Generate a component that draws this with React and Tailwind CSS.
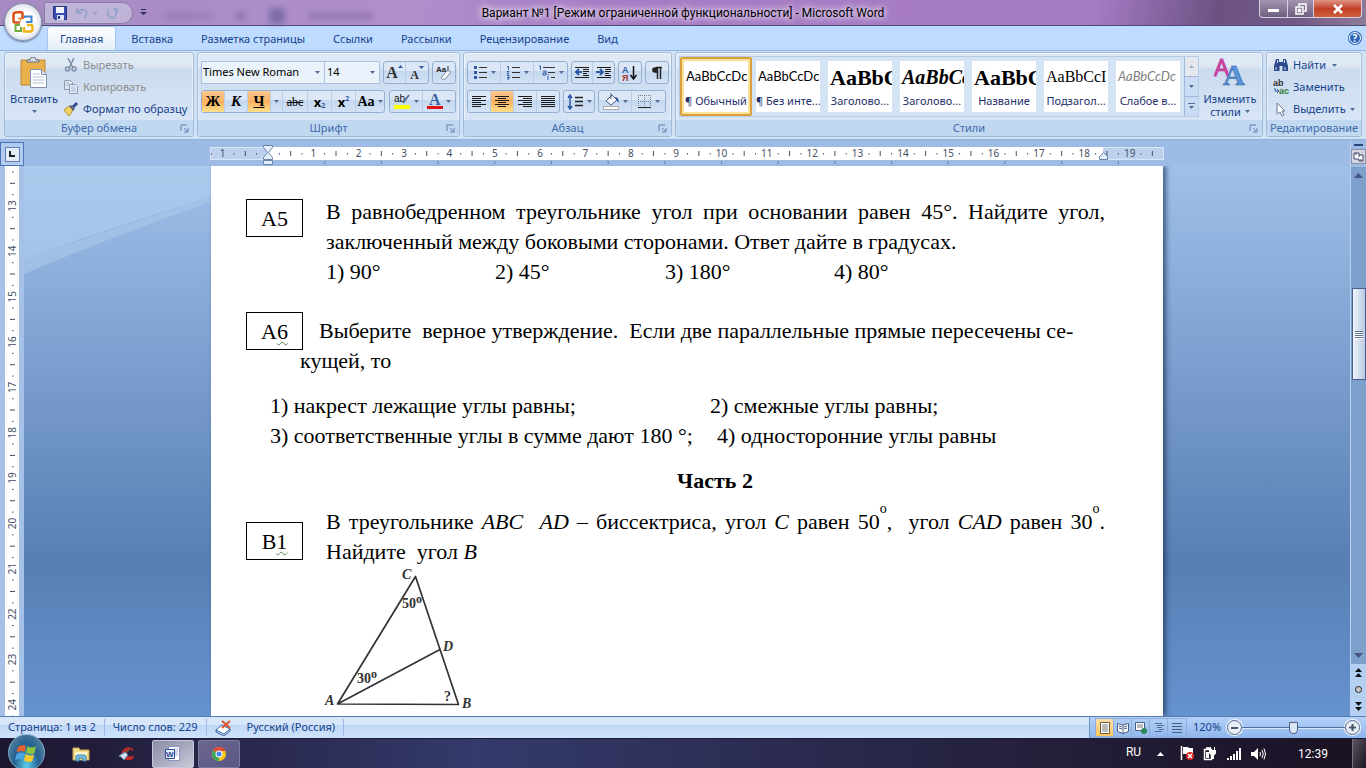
import React, { useState } from 'react';
import clsx from 'clsx';

const CM = 45.35;

const tabs = ['Главная', 'Вставка', 'Разметка страницы', 'Ссылки', 'Рассылки', 'Рецензирование', 'Вид'];

const styles = [
  { name: '¶ Обычный', preview: 'AaBbCcDc', font: 'font-[Lato,sans-serif] text-[13px]' },
  { name: '¶ Без инте...', preview: 'AaBbCcDc', font: 'font-[Lato,sans-serif] text-[13px]' },
  { name: 'Заголово...', preview: 'AaBbC', font: "font-['Liberation_Serif',serif] text-[22px] font-bold" },
  { name: 'Заголово...', preview: 'AaBbCc', font: "font-['Liberation_Serif',serif] text-[20px] font-bold italic" },
  { name: 'Название', preview: 'AaBbC', font: "font-['Liberation_Serif',serif] text-[22px] font-bold" },
  { name: 'Подзагол...', preview: 'AaBbCcI', font: "font-['Liberation_Serif',serif] text-[16px]" },
  { name: 'Слабое в...', preview: 'AaBbCcDc', font: 'font-[Lato,sans-serif] text-[13px] italic text-[#808080]' },
];

function Arrow({ className }) {
  return (
    <svg width="5" height="3" viewBox="0 0 5 3" className={clsx('shrink-0', className)} aria-hidden="true">
      <path d="M0 0h5L2.500 3z" fill="#4f6c9c" />
    </svg>
  );
}

function Svg({ w = 16, h = 16, children, className }) {
  return (
    <svg width={w} height={h} viewBox={`0 0 ${w} ${h}`} className={clsx('shrink-0', className)} fill="none" aria-hidden="true">
      {children}
    </svg>
  );
}

function Group({ label, launcher = true, className, children }) {
  return (
    <section className={clsx('flex flex-col rounded-[3px] border border-[#9ebbdc] bg-linear-to-b from-[#dfe9f5] from-15% via-[#cbdbee] via-20% to-[#dbe8f8] shadow-[inset_0_0_0_1px_rgba(255,255,255,0.5)]', className)}>
      <div className="flex flex-1 px-[3px]">{children}</div>
      <div className="relative flex h-4 items-center justify-center rounded-b-[3px] bg-[#c1d8f1] px-4 leading-4 text-[#3e6aaa]">
        <h2>{label}</h2>
        {launcher && (
          <button aria-label={`${label}: параметры`} className="absolute right-1 top-1">
            <Svg w={9} h={9}>
              <path d="M1 7V1h6M4 4l3 3M8 4v4H4" stroke="#5f7fae" />
            </Svg>
          </button>
        )}
      </div>
    </section>
  );
}

function Box({ children, className }) {
  return (
    <div className={clsx('flex h-[23px] divide-x divide-[#b9cde6] rounded-[3px] border border-[#94b0d4] bg-linear-to-b from-[#dbe7f6] from-40% via-[#c5d8ef] via-45% to-[#d3e2f5]', className)}>
      {children}
    </div>
  );
}

function Tool({ label, active, className, children }) {
  return (
    <button
      aria-label={label}
      className={clsx('flex items-center justify-center gap-[3px]', active && 'bg-linear-to-b from-[#fbc78f] via-[#fbb262] to-[#ffe08a]', className)}
    >
      {children}
    </button>
  );
}

function lines(rows, color = '#1b1b1b') {
  return rows.map(([x1, x2], i) => <path key={i} d={`M${x1} ${i * 2 + 1.5}H${x2}`} stroke={color} />);
}

function OfficeButton() {
  return (
    <button aria-label="Кнопка Office" className="absolute left-1 top-[3px] z-10 flex size-[38px] items-center justify-center rounded-full border border-[#8b97ac] bg-radial from-white from-45% via-[#dfe4ec] via-70% to-[#b4bfcf] shadow-[0_1px_2px_rgba(30,40,80,0.6)]">
      <Svg w={24} h={24}>
        <path d="M9 12.500H4Q2.500 12.500 2.500 11V5Q2.500 3 4.500 2.500L9 2Q11.500 2 11.500 4V9" stroke="#d9541e" strokeWidth="2.600" />
        <path d="M14 8V6.500H20.500V12H15" stroke="#3f86cf" strokeWidth="2" />
        <path d="M9 15H4.500V21H10V17" stroke="#6fae3a" strokeWidth="2" />
        <path d="M13 17V21.500H20Q21.500 21 21.500 19V16.500Q21.500 15 20 15H16" stroke="#eeb31b" strokeWidth="2.600" />
        <path d="M7 8.500H9.500V11" stroke="#e48a28" strokeWidth="1.500" />
      </Svg>
    </button>
  );
}

function TitleBar() {
  return (
    <header className="grid h-[26px] shrink-0 grid-cols-[1fr_auto_1fr] border-b border-[#4c4a72] bg-[linear-gradient(100deg,#a58bc2_0%,#b08fcb_30%,#a77cc5_45%,#a57bc4_80%,#6b5283_89%,#715a86_95%,#8f7c9a_100%)]">
      <div className="flex items-start pl-[44px]">
        <div className="mt-[2px] flex h-[22px] w-[89px] items-center gap-2 rounded-r-full border border-[#8d7bae] bg-[#c0b3d8] pl-2">
          <button aria-label="Сохранить">
            <Svg w={14} h={14}>
              <path d="M.5.500h13v13H2L.5 12z" fill="#3a4db0" stroke="#27357f" />
              <path d="M3 1h8v6H3z" fill="#f2f5ff" />
              <path d="M4 9h7v5H4z" fill="#dfe4f5" />
              <path d="M5 10h2v3H5z" fill="#27357f" />
            </Svg>
          </button>
          <button aria-label="Отменить" className="flex items-center gap-1">
            <Svg w={14} h={14}>
              <path d="M2 2v5h5M2.500 6.500Q6 2 10 4.500T9 12" stroke="#9aa5cb" strokeWidth="2" />
            </Svg>
            <Svg w={5} h={3}>
              <path d="M0 0h5L2.500 3z" fill="#a39fc4" />
            </Svg>
          </button>
          <button aria-label="Повторить">
            <Svg w={12} h={14}>
              <path d="M3 3Q0 8 4 11T10 8V4M7 3h4v4" stroke="#9aa5cb" strokeWidth="2" />
            </Svg>
          </button>
        </div>
        <button aria-label="Настройка панели быстрого доступа" className="ml-[7px] mt-2">
          <Svg w={7} h={8}>
            <path d="M1 1.500h5" stroke="#2e2d63" />
            <path d="M0 4h7L3.500 7z" fill="#2e2d63" />
          </Svg>
        </button>
        <div className="ml-[18px] mt-2 flex gap-6 opacity-50 blur-[3px]" aria-hidden="true">
          <i className="mt-1 h-2 w-12 bg-[#8a72ab]" />
          <i className="mt-1 size-2 bg-[#6d5590]" />
          <i className="size-4 rounded bg-[#4f508f]" />
          <i className="mt-1 h-2 w-16 bg-[#7d639f]" />
        </div>
      </div>
      <h1 className="self-center font-[Roboto,sans-serif] text-[12px] text-black [text-shadow:0_0_6px_white,0_0_8px_white]">
        Вариант №1 [Режим ограниченной функциональности] - Microsoft Word
      </h1>
      <div className="flex justify-end pr-1">
        <div className="flex h-[18px] rounded-b-[4px] border border-t-0 border-[#d8cfe0] bg-linear-to-b from-[#a394b0] to-[#6e5f80]">
          <button aria-label="Свернуть" className="flex w-7 items-end justify-center border-r border-[#d8cfe0] pb-[5px]">
            <i className="h-[3px] w-[11px] bg-white" />
          </button>
          <button aria-label="Восстановить" className="flex w-[26px] items-center justify-center border-r border-[#d8cfe0]">
            <Svg w={12} h={12}>
              <path d="M4 3V1h7v7H9M1 4h7v7H1zM3.500 6.500h2v2h-2z" stroke="white" strokeWidth="1.500" />
            </Svg>
          </button>
          <button aria-label="Закрыть" className="flex w-[47px] items-center justify-center rounded-br-[4px] bg-linear-to-b from-[#dd9482] via-[#c2402a] to-[#d0613b]">
            <Svg w={12} h={10}>
              <path d="M2 1l8 8M10 1L2 9" stroke="white" strokeWidth="2.500" />
            </Svg>
          </button>
        </div>
      </div>
    </header>
  );
}

function Tabs() {
  const [current, setCurrent] = useState('Главная');
  return (
    <nav className="flex h-6 shrink-0 items-end gap-1 bg-[#bfdbff] pl-12 pr-[5px]">
      {tabs.map((tab) => (
        <button
          key={tab}
          onClick={() => setCurrent(tab)}
          className={clsx('h-[23px] rounded-t-[3px] px-3 leading-5', tab === current ? 'bg-linear-to-b from-white to-[#e3edf9] text-[#15428b] shadow-[0_0_2px_#6593cf]' : 'text-[#15428b]')}
        >
          {tab}
        </button>
      ))}
      <button aria-label="Справка" className="mb-[6px] ml-auto flex size-[12px] items-center justify-center rounded-full border border-white bg-[#2a63b8] text-[10px] font-bold leading-3 text-white shadow-[0_0_0_1px_#2a63b8]">
        ?
      </button>
    </nav>
  );
}

function ClipboardGroup() {
  return (
    <Group label="Буфер обмена" className="w-[190px]">
      <button className="flex w-[52px] shrink-0 flex-col items-center pt-[4px] text-[#15428b]">
        <Svg w={28} h={32}>
          <path d="M1 3h24v25H1z" fill="#e9b04c" stroke="#bd8734" />
          <path d="M7 5V3h3q0-3 3-3t3 3h3v2z" fill="#d8dde6" stroke="#6b7280" />
          <path d="M10.500 12.500h11l5 5v13h-16z" fill="white" stroke="#8190ad" />
          <path d="M13 17h7M13 20h11M13 23h11M13 26h11" stroke="#b3bfd4" />
          <path d="M21.500 12.500v5h5" fill="#dbe4f2" stroke="#8190ad" />
        </Svg>
        <span className="mt-[2px] leading-4">Вставить</span>
        <Arrow className="mt-[3px]" />
      </button>
      <div className="ml-[3px] flex flex-col pt-px">
        <button className="flex h-[22px] items-center gap-[5px] pl-px text-[#8d8d8d]">
          <Svg w={14} h={14}>
            <path d="M4 0l4.500 9M10 0L5.500 9" stroke="#7f8da8" strokeWidth="1.500" />
            <circle cx="3.500" cy="11" r="2" stroke="#7f8da8" strokeWidth="1.500" />
            <circle cx="10" cy="11" r="2" stroke="#7f8da8" strokeWidth="1.500" />
          </Svg>
          Вырезать
        </button>
        <button className="flex h-[22px] items-center gap-1 text-[#8d8d8d]">
          <Svg w={16} h={14}>
            <path d="M1.500.500h6l2 2v7h-8z" fill="#dbe3ef" stroke="#8d9bb4" />
            <path d="M6.500 4.500h6l2 2v7h-8z" fill="#e8eef6" stroke="#8d9bb4" />
            <path d="M8 7h4M8 9h5M8 11h5M3 3h3M3 5h3" stroke="#a9b5c9" />
          </Svg>
          Копировать
        </button>
        <button className="flex h-[22px] items-center gap-1 text-[#15428b]">
          <Svg w={16} h={14}>
            <path d="M1 8l5-4 4 4-4 6z" fill="#f0d264" stroke="#b5922c" />
            <path d="M6 4l2-1 4 4-2 2z" fill="#5d6475" />
            <path d="M10 5l4-4" stroke="#2e4b90" strokeWidth="3" />
          </Svg>
          Формат по образцу
        </button>
      </div>
    </Group>
  );
}

const serif = "font-['Liberation_Serif',serif] text-black";

function FontGroup() {
  return (
    <Group label="Шрифт" className="w-[263px]">
      <div className="flex flex-1 flex-col gap-[6px] pt-2">
        <div className="flex justify-between">
          <div className="flex h-[23px] divide-x divide-[#abc1de] border border-[#abc1de] bg-[#eaf2fb]">
            <label className="relative flex items-center">
              <span className="sr-only">Шрифт</span>
              <select className="w-[122px] appearance-none bg-transparent pl-px text-black">
                <option>Times New Roman</option>
                <option>Arial</option>
              </select>
              <Arrow className="pointer-events-none absolute right-1" />
            </label>
            <label className="relative flex items-center">
              <span className="sr-only">Размер шрифта</span>
              <select className="w-[54px] appearance-none bg-transparent pl-[2px] text-black">
                <option>14</option>
                <option>16</option>
              </select>
              <Arrow className="pointer-events-none absolute right-1" />
            </label>
          </div>
          <Box>
            <Tool label="Увеличить размер" className={clsx('w-[22px] text-[16px] font-bold', serif)}>
              <span className="flex text-[#333]">A<Svg w={5} h={3} className="mt-1"><path d="M0 3h5L2.500 0z" fill="#2f5aa5" /></Svg></span>
            </Tool>
            <Tool label="Уменьшить размер" className={clsx('w-[22px] text-[12px] font-bold', serif)}>
              <span className="flex pt-1 text-[#333]">A<Svg w={5} h={3}><path d="M0 0h5L2.500 3z" fill="#2f5aa5" /></Svg></span>
            </Tool>
          </Box>
          <Box>
            <Tool label="Очистить формат" className="w-[22px]">
              <Svg w={18} h={18}>
                <text x="1" y="8" fontSize="8" fontWeight="bold" fill="#222" fontFamily="Liberation Sans">Aa</text>
                <path d="M13 2v6" stroke="#333" />
                <path d="M6 14l6-7q2-1 4 1l-6 7q-3 1-4-1z" fill="white" stroke="#7887a3" />
              </Svg>
            </Tool>
          </Box>
        </div>
        <div className="flex justify-between">
          <Box>
            <Tool label="Полужирный" active className={clsx('w-[23px] text-[15px] font-bold', serif)}>Ж</Tool>
            <Tool label="Курсив" className={clsx('w-[23px] text-[15px] font-bold italic', serif)}>К</Tool>
            <Tool label="Подчеркнутый" active className={clsx('w-[23px] text-[15px] font-bold underline', serif)}>Ч</Tool>
            <Tool label="Вид подчеркивания" className="w-3"><Arrow /></Tool>
            <Tool label="Зачеркнутый" className={clsx('w-[25px] text-[12px] line-through', serif)}>abc</Tool>
            <Tool label="Подстрочный знак" className="w-6 text-[13px] font-bold leading-4 text-black">
              <span className="flex items-end">x<span className="text-[7px] leading-[9px] text-[#2f5aa5]">2</span></span>
            </Tool>
            <Tool label="Надстрочный знак" className="w-6 text-[13px] font-bold leading-4 text-black">
              <span className="flex items-start">x<span className="text-[7px] leading-[9px] text-[#2f5aa5]">2</span></span>
            </Tool>
            <Tool label="Регистр" className={clsx('w-[28px] text-[14px] font-bold', serif)}>Aa<Arrow /></Tool>
          </Box>
          <Box>
            <Tool label="Цвет выделения" className="w-[33px]">
              <Svg w={17} h={17}>
                <text x="0" y="9" fontSize="10" fill="#111" fontFamily="Liberation Sans">ab</text>
                <path d="M15 2L9 10" stroke="#56719f" strokeWidth="2" />
                <path d="M0 12h16v4H0z" fill="#ffff00" />
              </Svg>
              <Arrow />
            </Tool>
            <Tool label="Цвет текста" className="w-[32px]">
              <Svg w={16} h={17}>
                <text x="2" y="12" fontSize="16" fontWeight="bold" fill="#3f62a3" fontFamily="Liberation Serif">A</text>
                <path d="M0 13h16v3H0z" fill="#e01010" />
              </Svg>
              <Arrow />
            </Tool>
          </Box>
        </div>
      </div>
    </Group>
  );
}

function ParagraphGroup() {
  return (
    <Group label="Абзац" className="w-[209px]">
      <div className="flex flex-1 flex-col gap-[6px] pt-2">
        <div className="flex gap-[3px]">
          <Box>
            <Tool label="Маркеры" className="w-[33px]">
              <Svg w={15} h={14}>
                <path d="M1 1.500h3M1 6.500h3M1 11.500h3" stroke="#2f5aa5" strokeWidth="3" />
                <path d="M6 1.500h8M6 6.500h8M6 11.500h8" stroke="#333" />
              </Svg>
              <Arrow />
            </Tool>
            <Tool label="Нумерация" className="w-[33px]">
              <Svg w={15} h={14}>
                <path d="M1 .500h1.500V4M1 5.500h2L1 8h2M1 9.500h2V13H1M1 11.500h2" stroke="#2f5aa5" />
                <path d="M6 1.500h8M6 6.500h8M6 11.500h8" stroke="#333" />
              </Svg>
              <Arrow />
            </Tool>
            <Tool label="Многоуровневый список" className="w-[33px]">
              <Svg w={18} h={16}>
                <path d="M1 1h1.500v4M5 6h3v4H5V8h3M10 11v4M10 9v1" stroke="#2f5aa5" />
                <path d="M5 2.500h12M10 7.500h7M13 12.500h4" stroke="#333" />
              </Svg>
              <Arrow />
            </Tool>
          </Box>
          <Box>
            <Tool label="Уменьшить отступ" className="w-[21px]">
              <Svg w={16} h={13}>
                {lines([[1, 15], [9, 15], [9, 15], [9, 13], [9, 15], [1, 15]])}
                <path d="M8 6H2M5 3L2 6l3 3" stroke="#2f5aa5" strokeWidth="2" />
              </Svg>
            </Tool>
            <Tool label="Увеличить отступ" className="w-[21px]">
              <Svg w={16} h={13}>
                {lines([[1, 15], [9, 15], [9, 15], [9, 13], [9, 15], [1, 15]])}
                <path d="M0 6h6M4 3l3 3-3 3" stroke="#2f5aa5" strokeWidth="2" />
              </Svg>
            </Tool>
          </Box>
          <Box>
            <Tool label="Сортировка" className="w-[22px]">
              <Svg w={16} h={16}>
                <text x="0" y="8" fontSize="9" fontWeight="bold" fill="#2f5aa5" fontFamily="Liberation Sans">А</text>
                <text x="0" y="16" fontSize="9" fontWeight="bold" fill="#a33a32" fontFamily="Liberation Sans">Я</text>
                <path d="M11.500 1v12M8.500 10l3 4 3-4" stroke="#111" strokeWidth="1.500" />
              </Svg>
            </Tool>
          </Box>
          <Box>
            <Tool label="Отобразить все знаки" className="w-[22px]">
              <Svg w={12} h={14}>
                <path d="M6.500 13V1.500M9.500 13V1.500M11 1.500H5" stroke="#222" strokeWidth="1.500" />
                <path d="M6 1Q1 1 1 4t5 3z" fill="#222" />
              </Svg>
            </Tool>
          </Box>
        </div>
        <div className="flex gap-[3px]">
          <Box>
            <Tool label="По левому краю" className="w-[23px]">
              <Svg w={16} h={13}>{lines([[1, 15], [1, 10], [1, 15], [1, 10], [1, 15], [1, 10]])}</Svg>
            </Tool>
            <Tool label="По центру" active className="w-[23px]">
              <Svg w={16} h={13}>{lines([[1, 15], [4, 12], [1, 15], [4, 12], [1, 15], [4, 12]])}</Svg>
            </Tool>
            <Tool label="По правому краю" className="w-[23px]">
              <Svg w={16} h={13}>{lines([[1, 15], [6, 15], [1, 15], [6, 15], [1, 15], [6, 15]])}</Svg>
            </Tool>
            <Tool label="По ширине" className="w-[22px]">
              <Svg w={16} h={13}>{lines([[1, 15], [1, 15], [1, 15], [1, 15], [1, 15], [1, 15]])}</Svg>
            </Tool>
          </Box>
          <Box>
            <Tool label="Междустрочный интервал" className="w-[30px]">
              <Svg w={17} h={16}>
                <path d="M3 1v14M1 4l2-3 2 3M1 12l2 3 2-3" stroke="#2f5aa5" strokeWidth="1.500" />
                <path d="M8 3.500h8M8 7.500h8M8 11.500h8" stroke="#222" strokeWidth="1.500" />
              </Svg>
              <Arrow />
            </Tool>
          </Box>
          <Box>
            <Tool label="Заливка" className="w-[33px]">
              <Svg w={17} h={17}>
                <path d="M3 8l6-6 5 5-6 5z" fill="#f3f6fb" stroke="#4b5d7d" />
                <path d="M8 0v6" stroke="#4b5d7d" />
                <path d="M12 4q4 0 4 6-3-3-4-6z" fill="#2f5aa5" />
                <path d="M.5 13.500h15v3H.5z" fill="white" stroke="#a7a7a7" />
              </Svg>
              <Arrow />
            </Tool>
            <Tool label="Границы" className="w-[33px]">
              <Svg w={15} h={15}>
                <path d="M1 1.500h13M1 7.500h13M1.500 1v12M7.500 1v12M13.500 1v12" stroke="#6c7d99" strokeDasharray="1 1" />
                <path d="M1 13.500h13" stroke="#222" />
              </Svg>
              <Arrow />
            </Tool>
          </Box>
        </div>
      </div>
    </Group>
  );
}

function StylesGroup() {
  return (
    <Group label="Стили" className="min-w-0 flex-1">
      <div className="my-[3px] flex h-[61px] flex-1 border border-[#b6cbe6] bg-[#d5e4f5]">
        <div className="flex flex-1 overflow-hidden">
          {styles.map((s, i) => (
            <button
              key={i}
              className={clsx('flex h-[59px] w-[72px] shrink-0 border-2 p-[2px]', i === 0 ? 'rounded-[2px] border-[#dc9f3e] bg-[#fbe29a]' : 'border-transparent')}
            >
              <span className="flex h-full w-full flex-col overflow-hidden bg-white text-black">
                <span className={clsx('flex h-8 items-center overflow-hidden whitespace-nowrap pl-[2px] text-left', s.font)}>{s.preview}</span>
                <span className="whitespace-nowrap text-center leading-4 text-[#1e2f6b]">{s.name}</span>
              </span>
            </button>
          ))}
        </div>
        <div className="flex w-[14px] flex-col divide-y divide-[#9fb9db] border-l border-[#9fb9db] bg-[#c9dcf3]">
          <button aria-label="Строка вверх" className="flex flex-1 items-center justify-center bg-[#e4e8ee]">
            <Svg w={5} h={3}><path d="M0 3h5L2.500 0z" fill="#a0a9b8" /></Svg>
          </button>
          <button aria-label="Строка вниз" className="flex flex-1 items-center justify-center"><Arrow /></button>
          <button aria-label="Дополнительные параметры" className="flex flex-1 items-center justify-center">
            <Svg w={7} h={7}><path d="M0 .500h7" stroke="#4f6c9c" /><path d="M1 3h5L3.500 6z" fill="#4f6c9c" /></Svg>
          </button>
        </div>
      </div>
      <button className="flex w-[62px] shrink-0 flex-col items-center pt-1 leading-[13px] text-[#15428b]">
        <Svg w={32} h={30} className="mb-[5px]">
          <text x="0" y="19" fontSize="24" fill="#c23f9d" stroke="#c23f9d" fontFamily="Open Sans">A</text>
          <text x="9" y="28" fontSize="30" fontWeight="bold" fill="#5b95d8" stroke="#2a5a9e" strokeWidth=".5" fontFamily="Liberation Serif">A</text>
        </Svg>
        <span>Изменить</span>
        <span className="flex items-center gap-1">стили <Arrow /></span>
      </button>
    </Group>
  );
}

function EditingGroup() {
  return (
    <Group label="Редактирование" launcher={false} className="w-[96px] [&_h2]:whitespace-nowrap">
      <div className="flex flex-col pl-[3px] pt-px text-[#15428b]">
        <button className="flex h-[22px] items-center gap-1">
          <Svg w={16} h={14}>
            <path d="M3 1h3v3h4V1h3l2 7v5H9.500V8h-3v5H1V8z" fill="#2c4a8c" />
            <path d="M3 9v3M12 9v3M4.500 2v3M11.500 2v3" stroke="#d3def3" />
          </Svg>
          Найти <Arrow className="ml-[2px]" />
        </button>
        <button className="flex h-[22px] items-center gap-1">
          <Svg w={16} h={16}>
            <text x="0" y="7" fontSize="9" fontWeight="bold" fill="#333" fontFamily="Liberation Sans">ab</text>
            <text x="6" y="15" fontSize="9" fontWeight="bold" fill="#2d7d32" fontFamily="Liberation Sans">ac</text>
            <path d="M2 9v3h3M4 10l2 2-2 2" stroke="#2f5aa5" />
          </Svg>
          Заменить
        </button>
        <button className="flex h-[22px] items-center gap-1">
          <Svg w={16} h={15}>
            <path d="M4 1v11l3-2 2 4 2-1-2-4h3z" fill="white" stroke="#6b7892" />
          </Svg>
          Выделить <Arrow />
        </button>
      </div>
    </Group>
  );
}

function HorizontalRuler() {
  const zero = 58;
  const marks = [];
  for (let q = -5; q <= 78; q++) {
    const x = zero + (q * CM) / 4;
    if (q === 0) continue;
    if (q % 4 === 0) marks.push(<text key={q} x={x} y="17" fontSize="10" textAnchor="middle" fill="#444f63">{Math.abs(q / 4)}</text>);
    else if (q % 2 === 0) marks.push(<path key={q} d={`M${x} 11v5`} stroke="#444f63" />);
    else marks.push(<path key={q} d={`M${x} 13v1.500`} stroke="#444f63" />);
  }
  return (
    <svg width="954" height="26" viewBox="0 0 954 26" fill="none" role="img" aria-label="Линейка" className="shrink-0">
      <path d="M.5 7.500h953v12H.5z" fill="#bdd1ee" stroke="#d9e6f7" />
      <path d="M58 7h835v13H58z" fill="white" />
      {marks}
      {Array.from({ length: 15 }, (_, i) => (
        <path key={i} d={`M${zero + (i + 1) * 1.25 * CM} 21v3`} stroke="#6780a6" />
      ))}
      <path d="M53.500 5.500h9v2l-4 5 4 5v2h-9v-2l4-5-4-5z" fill="#e4edf8" stroke="#6a86b0" />
      <path d="M53.500 20.500h9v4h-9z" fill="#e4edf8" stroke="#6a86b0" />
      <path d="M889.500 19.500v-3l4-4 4 4v3z" fill="#e4edf8" stroke="#6a86b0" />
    </svg>
  );
}

function VerticalRuler() {
  const marks = [];
  for (let q = 49; q <= 98; q++) {
    const y = 40 + ((q - 52) * CM) / 4;
    if (q % 4 === 0) marks.push(<text key={q} transform={`translate(11 ${y}) rotate(-90)`} fontSize="10" textAnchor="middle" fill="#444f63">{q / 4}</text>);
    else if (q % 2 === 0) marks.push(<path key={q} d={`M5 ${y}h5`} stroke="#444f63" />);
    else marks.push(<path key={q} d={`M7 ${y}h1.500`} stroke="#444f63" />);
  }
  return (
    <div className="w-6 shrink-0 overflow-hidden bg-[#a5c1e8] pl-[5px]">
      <svg width="14" height="560" viewBox="0 0 14 560" className="bg-white" role="img" aria-label="Вертикальная линейка">{marks}</svg>
    </div>
  );
}

function TaskBox({ letter, digit, marked, className }) {
  return (
    <div className={clsx('flex h-[38px] w-[57px] shrink-0 items-center justify-center border border-black bg-white pt-[2px]', className)}>
      {letter}<span className={clsx(marked && 'underline decoration-[#4f8a4f] decoration-wavy decoration-1 underline-offset-2')}>{digit}</span>
    </div>
  );
}

function Triangle() {
  return (
    <svg width="150" height="146" viewBox="326 568 150 146" className="overflow-visible" fill="none" role="img" aria-label="Треугольник ABC с биссектрисой AD">
      <path d="M337.500 705L415.500 577.500L458.500 705.500L337.500 705L440 650.500" stroke="#333" strokeWidth="1.700" strokeLinejoin="round" />
      <g fontFamily="Liberation Serif" fontWeight="bold" fill="#333">
        <g fontStyle="italic" fontSize="14">
          <text x="402" y="580">C</text>
          <text x="443" y="652">D</text>
          <text x="325" y="706">A</text>
          <text x="462" y="709">B</text>
        </g>
        <g fontSize="14">
          <text x="402" y="609">50</text>
          <text x="357" y="684">30</text>
          <text x="444" y="702">?</text>
        </g>
        <text x="416" y="604" fontSize="12">o</text>
        <text x="371" y="679" fontSize="12">o</text>
      </g>
    </svg>
  );
}

function Degree() {
  return <span className="relative -top-4 text-[14px] leading-none">o</span>;
}

function Page() {
  return (
    <article className="w-[952px] shrink-0 bg-white pl-[35px] pr-[58px] pt-[31px] font-['Liberation_Serif',serif] text-[22px] leading-[30px] text-black shadow-[3px_0_5px_rgba(30,50,90,0.7)]">
      <div className="flex gap-[23px]">
        <TaskBox letter="А" digit="5" className="mt-[2px]" />
        <div className="flex-1">
          <p className="text-justify">
            В равнобедренном треугольнике угол при основании равен 45°. Найдите угол, заключенный между боковыми сторонами. Ответ дайте в градусах.
          </p>
          <ul className="grid grid-cols-[169px_170px_169px_1fr]">
            <li>1) 90°</li>
            <li>2) 45°</li>
            <li>3) 180°</li>
            <li>4) 80°</li>
          </ul>
        </div>
      </div>

      <div className="mt-[25px] flex items-start">
        <TaskBox letter="А" digit="6" marked />
        <p className="-ml-[3px] mt-1 indent-[19px]">
          Выберите&nbsp; верное утверждение.&nbsp; Если две параллельные прямые пересечены се-<br />кущей, то
        </p>
      </div>

      <ul className="mt-[15px] pl-6">
        <li className="grid grid-cols-[440px_1fr]">
          <span>1) накрест лежащие углы равны;</span>
          <span>2) смежные углы равны;</span>
        </li>
        <li className="grid grid-cols-[447px_1fr]">
          <span>3) соответственные углы в сумме дают 180 °;</span>
          <span>4) односторонние углы равны</span>
        </li>
      </ul>

      <h2 className="mt-[15px] pl-[79px] text-center font-bold">Часть 2</h2>

      <div className="mt-[11px] flex gap-[23px]">
        <TaskBox letter="В" digit="1" marked className="mt-[15px]" />
        <div className="flex-1">
          <p className="text-justify">
            В треугольнике <i>ABC</i>&nbsp; <i>AD</i> – биссектриса, угол <i>C</i> равен 50<Degree />,&nbsp; угол <i>CAD</i> равен 30<Degree />. Найдите&nbsp; угол <i>B</i>
          </p>
          <Triangle />
        </div>
      </div>
    </article>
  );
}

function ScrollBar() {
  return (
    <div className="flex w-4 shrink-0 flex-col items-center border-l border-[#b9d2f2] bg-[#7d9fcc]">
      <div className="flex w-full flex-col items-center gap-[3px] bg-[#9dbbe4] pb-[3px] pt-1">
        <i className="h-[2px] w-[9px] bg-[#29467c]" />
        <button aria-label="Линейка" className="flex size-[15px] items-center justify-center border border-[#8d8fa5] bg-[#d3d5e2]">
          <Svg w={11} h={11}>
            <path d="M1 2h5v2h4v6H6V8H1zM3 2v2M6 4v2M8 8v2" stroke="#3a4669" fill="white" />
          </Svg>
        </button>
      </div>
      <button aria-label="Вверх" className="flex h-4 items-center">
        <Svg w={9} h={5}><path d="M0 5h9L4.500 0z" fill="#44557f" /></Svg>
      </button>
      <div className="flex w-full flex-1 flex-col items-center" role="scrollbar" aria-controls="document" aria-valuenow={27} aria-orientation="vertical">
        <i className="flex-[106]" />
        <div className="flex h-[92px] w-[14px] flex-col items-center justify-center gap-px border border-[#4c608c] bg-linear-to-r from-[#f0f4fa] to-[#b9c9e2]">
          {[0, 1, 2, 3].map((i) => <i key={i} className="h-px w-2 bg-[#60708f] shadow-[0_1px_white]" />)}
        </div>
        <i className="flex-[268]" />
      </div>
      <button aria-label="Вниз" className="flex h-[18px] w-full items-center justify-center">
        <Svg w={9} h={5}><path d="M0 0h9L4.500 5z" fill="#44557f" /></Svg>
      </button>
      <div className="flex w-full flex-col items-center gap-2 bg-[#b5cff3] pb-[5px] pt-1">
        <button aria-label="Предыдущая страница">
          <Svg w={7} h={9}><path d="M0 4h7L3.500 0zM0 9h7L3.500 5z" fill="#111" /></Svg>
        </button>
        <button aria-label="Выбор объекта перехода">
          <Svg w={9} h={9}><circle cx="4.500" cy="4.500" r="3" fill="#c9c9c9" stroke="#222" /></Svg>
        </button>
        <button aria-label="Следующая страница">
          <Svg w={7} h={9}><path d="M0 0h7L3.500 4zM0 5h7L3.500 9z" fill="#111" /></Svg>
        </button>
      </div>
    </div>
  );
}

function Workspace() {
  return (
    <div className="flex min-h-0 flex-1">
      <div className="flex min-w-0 flex-1 flex-col">
        <div className="flex h-[26px] shrink-0 bg-[#9dbbe4]">
          <button aria-label="Табуляция" className="mt-[2px] flex h-6 w-6 shrink-0 items-center justify-center border border-[#4a74b8] bg-[#b3cbec]">
            <span className="flex size-[15px] items-center justify-center border border-[#5c7fb8] bg-[#e3ecf9]">
              <Svg w={6} h={6}><path d="M1 0v5h5" stroke="#222" strokeWidth="2" /></Svg>
            </span>
          </button>
          <div className="flex min-w-0 flex-1 justify-center overflow-hidden">
            <HorizontalRuler />
          </div>
        </div>
        <div className="flex min-h-0 flex-1">
          <VerticalRuler />
          <main id="document" className="relative flex min-w-0 flex-1 justify-center overflow-hidden bg-linear-to-b from-[#9fc0e9] via-[#587fb4] via-72% to-[#6593cf]">
            <svg className="absolute left-0 top-0" width="187" height="110" viewBox="0 0 187 110" aria-hidden="true">
              <path d="M0 0H187V31Q90 60 0 94z" fill="#b4d0ee" opacity=".6" />
              <path d="M0 94Q95 60 187 31V36Q100 66 0 108z" fill="#a9c5e8" opacity=".7" />
            </svg>
            <div className="relative flex">
              <Page />
            </div>
          </main>
        </div>
      </div>
      <ScrollBar />
    </div>
  );
}

function ViewButton({ label, active, children }) {
  return (
    <button aria-label={label} className={clsx('flex w-[18px] items-center justify-center', active && 'bg-linear-to-b from-[#fbdca5] to-[#ffc65c]')}>
      <Svg w={12} h={12}>{children}</Svg>
    </button>
  );
}

function StatusBar() {
  const [zoom, setZoom] = useState(120);
  return (
    <footer className="flex h-[22px] shrink-0 items-center border-t border-[#567db0] bg-linear-to-b from-[#d7e6f9] from-35% via-[#c0d8f6] via-40% to-[#cfe2fb] text-[#15428b]">
      <span className="px-2">Страница: 1 из 2</span>
      <span className="border-l border-[#9dbbe4] px-2">Число слов: 229</span>
      <span className="flex items-center gap-4 border-x border-[#9dbbe4] px-2">
        <Svg w={16} h={16}>
          <path d="M1 10l6-5 8 4-6 5z" fill="white" stroke="#3b64a8" />
          <path d="M1 10v2l8 4 6-5V9" stroke="#3b64a8" />
          <path d="M7 1l8 7M15 1L7 8" stroke="#e0542b" strokeWidth="2" />
        </Svg>
        Русский (Россия)
      </span>
      <div className="ml-auto flex h-full items-center border-l border-[#6d92c7] bg-linear-to-b from-[#b4d1f7] to-[#8fb6ec] pl-[5px] pr-[6px]">
        <div className="flex h-[19px] divide-x divide-[#8eaedb] border border-[#8eaedb]">
          <ViewButton label="Разметка страницы" active>
            <path d="M1.500.500h9v11h-9z" fill="white" stroke="#6a5b3c" />
            <path d="M3 3h6M3 5h6M3 7h6M3 9h6" stroke="#777" />
          </ViewButton>
          <ViewButton label="Режим чтения">
            <path d="M.5 1.500L6 3l5.500-1.500v8L6 11.500.5 9.500z" fill="white" stroke="#4a5d82" />
            <path d="M6 3v8M2 4l3 1M2 6l3 1M7 5l3-1M7 7l3-1" stroke="#4a5d82" />
          </ViewButton>
          <ViewButton label="Веб-документ">
            <path d="M.5.500h9v8h-9z" fill="white" stroke="#4a5d82" />
            <path d="M2 3h6M2 5h6" stroke="#777" />
            <circle cx="9" cy="9" r="3" fill="#2e8a5b" />
          </ViewButton>
          <ViewButton label="Структура">
            <path d="M2 1.500h7M4 3.500h7M4 5.500h5M6 7.500h5M2 9.500h7" stroke="#5b6f95" />
          </ViewButton>
          <ViewButton label="Черновик">
            <path d="M1 1.500h10M1 4.500h10M1 7.500h10M1 10.500h10" stroke="#4a5d82" />
          </ViewButton>
        </div>
        <span className="w-[40px] pl-[6px]">{zoom}%</span>
        <button aria-label="Уменьшить" onClick={() => setZoom(zoom - 10)} className="flex size-[15px] items-center justify-center rounded-full border border-[#4a5f86] bg-[#e9f0fa] shadow-[0_0_1px_1px_white]">
          <i className="h-[2px] w-[7px] bg-[#4a5565]" />
        </button>
        <label className="relative flex w-[103px] items-center">
          <span className="sr-only">Масштаб</span>
          <i className="absolute inset-x-0 h-px bg-[#4f6f9f] shadow-[0_1px_#d6e6fb]" />
          <input
            type="range"
            min="0"
            max="240"
            value={zoom}
            onChange={(e) => setZoom(Number(e.target.value))}
            className="relative h-3 w-full appearance-none bg-transparent [&::-webkit-slider-thumb]:h-3 [&::-webkit-slider-thumb]:w-[9px] [&::-webkit-slider-thumb]:appearance-none [&::-webkit-slider-thumb]:rounded-b-[4px] [&::-webkit-slider-thumb]:border [&::-webkit-slider-thumb]:border-[#4a5f86] [&::-webkit-slider-thumb]:bg-[#dce7f6]"
          />
        </label>
        <button aria-label="Увеличить" onClick={() => setZoom(zoom + 10)} className="flex size-[15px] items-center justify-center rounded-full border border-[#4a5f86] bg-[#e9f0fa] shadow-[0_0_1px_1px_white]">
          <Svg w={9} h={9}><path d="M1 4.500h7M4.500 1v7" stroke="#4a5565" strokeWidth="2" /></Svg>
        </button>
      </div>
    </footer>
  );
}

function TaskBar() {
  return (
    <div className="relative flex h-[30px] shrink-0 items-center border-t border-[#1b1b35] bg-linear-to-r from-[#1d1630] via-[#343a6b] via-35% to-[#1a1122] pl-[58px] text-white">
      <button aria-label="Пуск" className="absolute -top-[5px] left-2 flex size-[37px] items-center justify-center rounded-full border border-[#7fb0c6] bg-radial-[at_50%_90%] from-[#5ad0ee] via-[#24608f] via-50% to-[#6d91a8]">
        <Svg w={24} h={22}>
          <path d="M3 5q4-3 8-1L9.500 10q-4-2-8 .500z" fill="#e8622d" />
          <path d="M12.500 4.500q4 2 8.500 0L19.500 11q-4 2-8.500-.5z" fill="#8cc63f" />
          <path d="M1.500 12q4-2.500 8-.5L8 18q-4-2-8 .500z" fill="#49a5e0" />
          <path d="M10.500 12q4 2.500 8.500.500L17.500 19q-4 2-8.500-.5z" fill="#fbc92d" />
        </Svg>
      </button>
      <button aria-label="Проводник" className="flex w-[46px] justify-center">
        <Svg w={18} h={16}>
          <path d="M1 2h6l1 2h9v10H1z" fill="#f2dc8c" stroke="#c9a84a" />
          <path d="M3 6h12v3H3z" fill="#fbf3c9" />
          <path d="M4 15v-4q0-2 2-2h6q2 0 2 2v4h-3v-3H7v3z" fill="#7cc0e6" stroke="#3c86b4" />
        </Svg>
      </button>
      <button aria-label="CCleaner" className="flex w-[46px] justify-center">
        <Svg w={18} h={16}>
          <path d="M16 4Q11-1 6 3t-1 9q4 4 10 1l1-4q-4 3-7 0t0-5q3-2 6 1z" fill="#c22a25" />
          <path d="M8 7l3-4" stroke="#8a4b24" strokeWidth="2" />
          <path d="M1 10l6-4 3 3-4 5q-2-3-5-4z" fill="#cfe0ee" stroke="#5b86ad" />
        </Svg>
      </button>
      <button aria-label="Microsoft Word" className="ml-[2px] flex h-[28px] w-[42px] items-center justify-center rounded-[2px] border border-[#c7c7da] bg-linear-to-br from-[#8a8ba6] to-[#c9c9d8]">
        <Svg w={16} h={16}>
          <path d="M3.500.500h11v14h-11z" fill="white" stroke="#8796bd" />
          <path d="M10 3h3M10 5h3M10 7h3M10 9h3" stroke="#9fb0d4" />
          <path d="M.5 3.500h9v9h-9z" fill="#eaf0fb" stroke="#2b4f9d" />
          <text x="1" y="11" fontSize="8" fontWeight="bold" fill="#1f3f8f" fontFamily="Liberation Sans">W</text>
        </Svg>
      </button>
      <button aria-label="Google Chrome" className="ml-1 flex h-[28px] w-[42px] items-center justify-center rounded-[2px] border border-[#7c7a9c] bg-linear-to-br from-[#6c6790] to-[#5a5684]">
        <Svg w={16} h={16}>
          <circle cx="8" cy="8" r="7" fill="#f5c518" />
          <path d="M8 8L2 4.500A7 7 0 0 1 14.500 5H8z" fill="#dd4b39" />
          <path d="M8 8v7A7 7 0 0 1 2 4.500z" fill="#3aa757" />
          <circle cx="8" cy="8" r="3.500" fill="white" />
          <circle cx="8" cy="8" r="2.500" fill="#4285f4" />
        </Svg>
      </button>
      <div className="ml-auto flex h-full items-center">
        <span className="mb-1 mr-4 font-[Roboto,sans-serif] text-[12px]">RU</span>
        <button aria-label="Скрытые значки" className="mr-4"><Svg w={7} h={4}><path d="M0 4h7L3.500 0z" fill="white" /></Svg></button>
        <button aria-label="Центр поддержки" className="mr-2">
          <Svg w={15} h={15}>
            <path d="M1.500 0v14" stroke="white" strokeWidth="1.500" />
            <path d="M3 1h5l1 1h4v6H3z" fill="white" />
            <circle cx="10" cy="10" r="4" fill="#d22" />
            <path d="M8 8l4 4M12 8l-4 4" stroke="white" strokeWidth="1.500" />
          </Svg>
        </button>
        <button aria-label="Питание" className="mr-[10px]">
          <Svg w={14} h={15}>
            <path d="M1.500 3.500h7v10h-7zM3 2h4" stroke="white" strokeWidth="1.500" />
            <path d="M3 6h3v6H3zM6 4h7v3q0 2-2 2v4H9V9Q6 9 6 6zM7 1h1v3H7zM11 1h1v3h-1z" fill="white" />
          </Svg>
        </button>
        <button aria-label="Сеть" className="mr-[10px]">
          <Svg w={14} h={12}><path d="M0 10h2v2H0zM3 8h2v4H3zM6 6h2v6H6zM9 3h2v9H9zM12 0h2v12h-2z" fill="white" /></Svg>
        </button>
        <button aria-label="Громкость" className="mr-8">
          <Svg w={15} h={14}>
            <path d="M0 5h3l4-4v12L3 9H0z" fill="white" />
            <path d="M9 5q1 2 0 4M11 3q2.500 4 0 8M13 1.500q3 5.500 0 11" stroke="white" />
          </Svg>
        </button>
        <time className="mr-6 font-[Roboto,sans-serif] text-[12px]">12:39</time>
        <button aria-label="Показать рабочий стол" className="h-full w-[14px] border-l border-[#77707f] bg-linear-to-br from-[#5c5462] to-[#1d1522]" />
      </div>
    </div>
  );
}

export default function App() {
  return (
    <div className="relative flex h-screen flex-col overflow-hidden font-['Noto_Sans','Open_Sans',sans-serif] text-[11px]">
      <OfficeButton />
      <TitleBar />
      <Tabs />
      <div className="flex h-[90px] shrink-0 gap-[3px] border-y border-[#8db2e3] bg-[#d2e2f5] px-1 pb-[2px] pt-px">
        <ClipboardGroup />
        <FontGroup />
        <ParagraphGroup />
        <StylesGroup />
        <EditingGroup />
      </div>
      <Workspace />
      <StatusBar />
      <TaskBar />
    </div>
  );
}
